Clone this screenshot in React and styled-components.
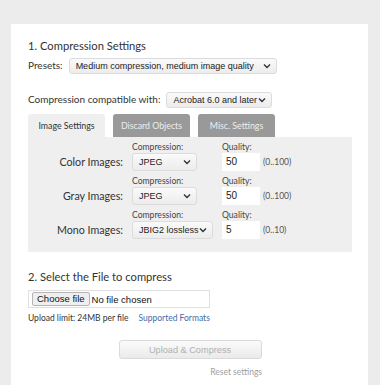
import React from "react";
import styled, { createGlobalStyle } from "styled-components";

const GlobalStyle = createGlobalStyle`
  html, body {
    margin: 0;
    padding: 0;
    background: #ececec;
  }
  body {
    font-family: Lato, "Open Sans", sans-serif;
    color: #333;
  }
`;

const Chevron = () => (
  <svg width="8" height="6" viewBox="0 0 8 6">
    <path d="M1 1.5 L4 4.5 L7 1.5" fill="none" stroke="#333" strokeWidth="1.4" />
  </svg>
);

const rows = [
  { name: "Color Images:", comp: "JPEG", quality: "50", range: "(0..100)", wide: false },
  { name: "Gray Images:", comp: "JPEG", quality: "50", range: "(0..100)", wide: false },
  { name: "Mono Images:", comp: "JBIG2 lossless", quality: "5", range: "(0..10)", wide: true },
];

const App = () => {
  return (
    <Page>
      <GlobalStyle />
      <Card>
        <Heading>1. Compression Settings</Heading>
        <FieldRow>
          <Label>Presets:</Label>
          <Select width={208}>
            <span>Medium compression, medium image quality</span>
            <Chevron />
          </Select>
        </FieldRow>
        <FieldRow spaced>
          <Label>Compression compatible with:</Label>
          <Select width={106}>
            <span>Acrobat 6.0 and later</span>
            <Chevron />
          </Select>
        </FieldRow>

        <Tabs>
          <Tab active>Image Settings</Tab>
          <Tab>Discard Objects</Tab>
          <Tab>Misc. Settings</Tab>
        </Tabs>
        <Panel>
          {rows.map((r) => (
            <ImageRow key={r.name}>
              <RowName>{r.name}</RowName>
              <Cell>
                <SmallLabel>Compression:</SmallLabel>
                <Select width={r.wide ? 81 : 65} tall>
                  <span>{r.comp}</span>
                  <Chevron />
                </Select>
              </Cell>
              <Cell>
                <SmallLabel>Quality:</SmallLabel>
                <QualityLine>
                  <Input>{r.quality}</Input>
                  <Range>{r.range}</Range>
                </QualityLine>
              </Cell>
            </ImageRow>
          ))}
        </Panel>

        <Heading second>2. Select the File to compress</Heading>
        <FileBox>
          <FileButton>Choose file</FileButton>
          <FileText>No file chosen</FileText>
        </FileBox>
        <Hint>
          Upload limit: 24MB per file
          <Link>Supported Formats</Link>
        </Hint>
        <Actions>
          <SubmitButton disabled>Upload &amp; Compress</SubmitButton>
          <Reset>Reset settings</Reset>
        </Actions>
      </Card>
    </Page>
  );
};

const Page = styled.div`
  width: 380px;
  height: 385px;
  overflow: hidden;
  padding: 24px 12px 0 11px;
  box-sizing: border-box;
`;

const Card = styled.div`
  background: #fff;
  min-height: 361px;
  padding: 13px 16px 0 17px;
  box-sizing: border-box;
`;

const Heading = styled.h3`
  margin: ${({ second }) => (second ? "16px 0 5px" : "0 0 3px")};
  font-size: 11.2px;
  font-weight: 400;
  line-height: 17px;
  color: #333;
`;

const FieldRow = styled.div`
  display: flex;
  align-items: center;
  gap: 6px;
  margin-bottom: ${({ spaced }) => (spaced ? "6px" : "17px")};
`;

const Label = styled.span`
  font-size: 10px;
  line-height: 17px;
`;

const Select = styled.div`
  width: ${({ width }) => width}px;
  height: ${({ tall }) => (tall ? 18 : 16)}px;
  box-sizing: border-box;
  display: flex;
  align-items: center;
  justify-content: space-between;
  padding: 0 5px 0 6px;
  background: linear-gradient(#fafafa, #ececec);
  border: 1px solid #dcdcdc;
  border-radius: 3px;
  font-family: "Liberation Sans", Arial, sans-serif;
  font-size: 9px;
  color: #222;
  white-space: nowrap;
  overflow: hidden;
`;

const Tabs = styled.div`
  display: flex;
  gap: 8px;
`;

const Tab = styled.div`
  width: 77px;
  height: 23px;
  display: flex;
  align-items: center;
  justify-content: center;
  border-radius: 3px 3px 0 0;
  font-size: 8.8px;
  background: ${({ active }) => (active ? "#efefef" : "#999")};
  color: ${({ active }) => (active ? "#333" : "#eee")};
`;

const Panel = styled.div`
  background: #efefef;
  padding: 4px 0 9px;
  display: flex;
  flex-direction: column;
`;

const ImageRow = styled.div`
  display: grid;
  grid-template-columns: 95px 81px auto;
  column-gap: 9px;
  align-items: end;
  height: 34px;
`;

const RowName = styled.span`
  text-align: right;
  font-size: 10.7px;
  line-height: 18px;
  margin-bottom: 4px;
`;

const Cell = styled.div`
  display: flex;
  flex-direction: column;
  align-items: flex-start;
  padding-bottom: 4px;
`;

const SmallLabel = styled.span`
  font-size: 8.6px;
  line-height: 12px;
  color: #444;
`;

const QualityLine = styled.div`
  display: flex;
  align-items: center;
  gap: 3px;
`;

const Input = styled.div`
  width: 38px;
  height: 18px;
  box-sizing: border-box;
  background: #fff;
  padding: 0 4px;
  font-family: "Liberation Sans", Arial, sans-serif;
  font-size: 10px;
  line-height: 17px;
  color: #222;
`;

const Range = styled.span`
  font-size: 8.5px;
  color: #555;
`;

const FileBox = styled.div`
  width: 182px;
  height: 18px;
  box-sizing: border-box;
  border: 1px solid #e0e0e0;
  display: flex;
  align-items: center;
  padding-left: 3px;
  gap: 2px;
  font-family: "Liberation Sans", Arial, sans-serif;
  font-size: 9.5px;
`;

const FileButton = styled.span`
  background: #efefef;
  border: 1px solid #b5b5b5;
  border-radius: 2px;
  padding: 0 4px;
  line-height: 12px;
  color: #111;
`;

const FileText = styled.span`
  color: #111;
`;

const Hint = styled.div`
  margin-top: 3px;
  font-size: 8.5px;
  line-height: 14px;
  display: flex;
  gap: 10px;
`;

const Link = styled.span`
  color: #3f6ca6;
`;

const Actions = styled.div`
  display: flex;
  flex-direction: column;
  align-items: center;
  margin-top: 15px;
`;

const SubmitButton = styled.button`
  width: 143px;
  height: 19px;
  border: 1px solid #dadada;
  border-radius: 3px;
  background: linear-gradient(#fbfbfb, #eaeaea);
  color: #b0b0b0;
  font-family: "Liberation Sans", Arial, sans-serif;
  font-size: 9.2px;
  padding: 0;
`;

const Reset = styled.span`
  align-self: flex-end;
  margin-right: 90px;
  margin-top: 8px;
  font-size: 8.5px;
  color: #a0a0a0;
`;

export default App;
